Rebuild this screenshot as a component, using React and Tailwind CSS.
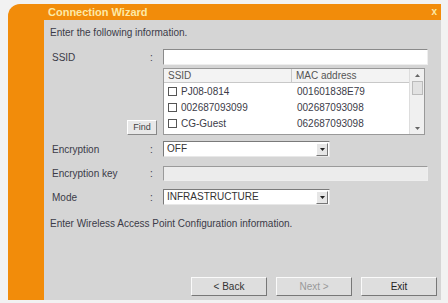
import React from "react";

const font = { fontFamily: '"Liberation Sans", Arial, sans-serif' };

function Check() {
  return <span className="inline-block w-[9px] h-[9px] border border-[#555] bg-white mr-[4px] shrink-0" />;
}

function Select({ value }) {
  return (
    <div className="w-[167px] h-[16px] bg-white border border-[#7a7a7a] border-r-[#e8e8e8] border-b-[#e8e8e8] flex items-center">
      <span className="flex-1 pl-[3px] text-[10px] text-[#333] leading-none">{value}</span>
      <span className="w-[12px] h-[13px] mr-[1px] bg-[#e6e6e6] border border-[#fff] border-r-[#777] border-b-[#777] flex items-center justify-center">
        <svg width="5" height="3" viewBox="0 0 5 3"><path d="M0 0h5L2.5 3z" fill="#222" /></svg>
      </span>
    </div>
  );
}

export default function App() {
  const rows = [
    ["PJ08-0814", "001601838E79"],
    ["002687093099", "002687093098"],
    ["CG-Guest", "062687093098"],
  ];
  return (
    <div className="w-[448px] h-[303px] bg-[#f2f2f2] pt-[4px] pl-[8px] pr-[7px] pb-[3px]" style={font}>
      <div className="h-full bg-[#f28c0a] rounded-tl-[12px] flex flex-col">
        <div className="h-[16px] flex items-center pl-[40px] pr-[4px] justify-between">
          <span className="text-[11px] font-bold text-[#fce9a6] leading-none">Connection Wizard</span>
          <span className="text-[10px] font-bold text-[#fce9a6] leading-none">x</span>
        </div>
        <div className="flex-1 ml-[36px] bg-[#d5d5d5] flex flex-col pl-[6px] pr-[13px] text-[#3b3b48] text-[10px]">
          <div className="h-[25px] flex items-center leading-none">Enter the following information.</div>
          <div className="flex items-center mt-[4px] h-[16px]">
            <span className="w-[100px] pl-[2px]">SSID</span>
            <span className="w-[13px]">:</span>
            <div className="flex-1 h-[16px] bg-white border border-[#8a8a8a] border-r-[#eee] border-b-[#eee]" />
          </div>
          <div className="flex mt-[3px]">
            <div className="w-[113px] flex items-end justify-end pr-[6px]">
              <div className="w-[30px] h-[15px] bg-[#e8e8e8] border border-[#fff] border-r-[#888] border-b-[#888] flex items-center justify-center text-[9px] text-[#444]">Find</div>
            </div>
            <div className="w-[262px] h-[67px] bg-white border border-[#999] flex">
              <div className="flex-1 flex flex-col">
                <div className="h-[14px] flex bg-[#f3f3f3] border-b border-[#c8c8c8] text-[#555]">
                  <span className="w-[128px] pl-[4px] border-r border-[#c8c8c8] leading-[13px]">SSID</span>
                  <span className="flex-1 pl-[4px] leading-[13px]">MAC address</span>
                </div>
                {rows.map(([s, m]) => (
                  <div key={s} className="h-[16px] flex items-center">
                    <span className="w-[129px] pl-[4px] flex items-center"><Check />{s}</span>
                    <span className="flex-1 pl-[4px]">{m}</span>
                  </div>
                ))}
              </div>
              <div className="w-[15px] bg-[#f0f0f0] border-l border-[#ddd] flex flex-col items-center">
                <div className="h-[12px] flex items-center"><svg width="5" height="3" viewBox="0 0 5 3"><path d="M0 3h5L2.5 0z" fill="#666" /></svg></div>
                <div className="w-[11px] h-[14px] bg-[#e2e2e2] border border-[#bbb]" />
                <div className="flex-1" />
                <div className="h-[12px] flex items-center"><svg width="5" height="3" viewBox="0 0 5 3"><path d="M0 0h5L2.5 3z" fill="#666" /></svg></div>
              </div>
            </div>
          </div>
          <div className="flex items-center mt-[6px] h-[16px]">
            <span className="w-[100px] pl-[2px]">Encryption</span>
            <span className="w-[13px]">:</span>
            <Select value="OFF" />
          </div>
          <div className="flex items-center mt-[8px] h-[16px]">
            <span className="w-[100px] pl-[2px]">Encryption key</span>
            <span className="w-[13px]">:</span>
            <div className="flex-1 h-[15px] bg-[#ececec] border border-[#9a9a9a] border-r-[#eee] border-b-[#eee]" />
          </div>
          <div className="flex items-center mt-[8px] h-[16px]">
            <span className="w-[100px] pl-[2px]">Mode</span>
            <span className="w-[13px]">:</span>
            <Select value="INFRASTRUCTURE" />
          </div>
          <div className="mt-[14px] leading-none">Enter Wireless Access Point Configuration information.</div>
          <div className="flex-1" />
          <div className="flex justify-end gap-[9px] mb-[4px] -mr-[9px]">
            {[["< Back", "#333"], ["Next >", "#999"], ["Exit", "#222"]].map(([t, c]) => (
              <div key={t} className="w-[76px] h-[19px] bg-[#dedede] border border-[#fafafa] border-r-[#777] border-b-[#777] flex items-center justify-center text-[10px]" style={{ color: c }}>{t}</div>
            ))}
          </div>
        </div>
      </div>
    </div>
  );
}
